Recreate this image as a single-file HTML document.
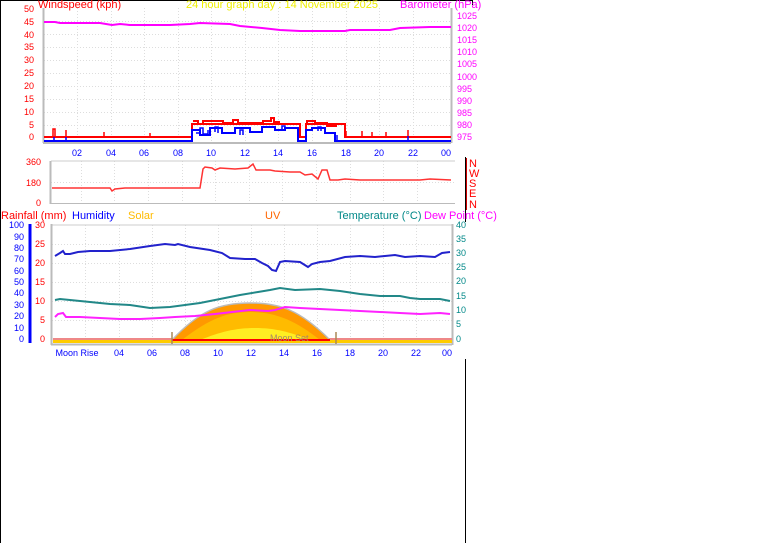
<!DOCTYPE html>
<html><head><meta charset="utf-8"><style>
html,body{margin:0;padding:0;background:#fff;width:761px;height:543px;overflow:hidden}
svg{display:block}
text{font-family:"Liberation Sans",sans-serif}
</style></head><body>
<svg width="761" height="543" viewBox="0 0 761 543" xmlns="http://www.w3.org/2000/svg">
<rect width="761" height="543" fill="#fff"/>
<!-- borders -->
<line x1="0.5" y1="0" x2="0.5" y2="543" stroke="#000"/>
<line x1="0" y1="0.5" x2="473" y2="0.5" stroke="#000"/>
<line x1="472.5" y1="0" x2="472.5" y2="5" stroke="#000"/>
<line x1="465.5" y1="157" x2="465.5" y2="222" stroke="#000"/>
<line x1="465.5" y1="359" x2="465.5" y2="543" stroke="#000"/>

<!-- ===== Chart 1 ===== -->
<text x="38" y="8" font-size="11" fill="#f00">Windspeed (kph)</text>
<text x="186" y="8" font-size="11" fill="#ee0">24 hour graph day : 14 November 2025</text>
<text x="400" y="8" font-size="11" fill="#f0f">Barometer (hPa)</text>
<g stroke="#ddd" stroke-dasharray="1,2" stroke-width="1">
<line x1="44" y1="21.5" x2="451" y2="21.5"/><line x1="44" y1="34.5" x2="451" y2="34.5"/><line x1="44" y1="47.5" x2="451" y2="47.5"/><line x1="44" y1="60.5" x2="451" y2="60.5"/><line x1="44" y1="73.5" x2="451" y2="73.5"/><line x1="44" y1="86.5" x2="451" y2="86.5"/><line x1="44" y1="99.5" x2="451" y2="99.5"/><line x1="44" y1="112.5" x2="451" y2="112.5"/><line x1="44" y1="125.5" x2="451" y2="125.5"/>
<line x1="77.5" y1="8" x2="77.5" y2="142"/><line x1="111.5" y1="8" x2="111.5" y2="142"/><line x1="144.5" y1="8" x2="144.5" y2="142"/><line x1="178.5" y1="8" x2="178.5" y2="142"/><line x1="211.5" y1="8" x2="211.5" y2="142"/><line x1="245.5" y1="8" x2="245.5" y2="142"/><line x1="278.5" y1="8" x2="278.5" y2="142"/><line x1="312.5" y1="8" x2="312.5" y2="142"/><line x1="346.5" y1="8" x2="346.5" y2="142"/><line x1="379.5" y1="8" x2="379.5" y2="142"/><line x1="413.5" y1="8" x2="413.5" y2="142"/>
</g>
<line x1="43.5" y1="8" x2="43.5" y2="143" stroke="#bbb" stroke-width="2"/>
<line x1="43" y1="143" x2="451" y2="143" stroke="#bbb" stroke-width="2"/>
<line x1="451.5" y1="8" x2="451.5" y2="143" stroke="#bbb" stroke-width="2"/>
<g font-size="9" fill="#f00" text-anchor="end">
<text x="34" y="12">50</text><text x="34" y="25">45</text><text x="34" y="38">40</text><text x="34" y="50">35</text><text x="34" y="63">30</text><text x="34" y="76">25</text><text x="34" y="89">20</text><text x="34" y="102">15</text><text x="34" y="115">10</text><text x="34" y="128">5</text><text x="34" y="140">0</text>
</g>
<g font-size="9" fill="#f0f">
<text x="457" y="19">1025</text><text x="457" y="31">1020</text><text x="457" y="43">1015</text><text x="457" y="55">1010</text><text x="457" y="67">1005</text><text x="457" y="80">1000</text><text x="457" y="92">995</text><text x="457" y="104">990</text><text x="457" y="116">985</text><text x="457" y="128">980</text><text x="457" y="140">975</text>
</g>
<g font-size="9" fill="#00f" text-anchor="middle">
<text x="77" y="156">02</text><text x="111" y="156">04</text><text x="144" y="156">06</text><text x="178" y="156">08</text><text x="211" y="156">10</text><text x="245" y="156">12</text><text x="278" y="156">14</text><text x="312" y="156">16</text><text x="346" y="156">18</text><text x="379" y="156">20</text><text x="413" y="156">22</text><text x="446" y="156">00</text>
</g>
<polyline fill="none" stroke="#f0f" stroke-width="2" points="44,22 55,22 60,23 100,23 112,25 120,24 130,25 170,25 190,24 200,23 230,24 240,26 262,28 280,30 300,31 345,31 350,30 390,30 400,28 430,27 451,27"/>
<path d="M44,137H192V124H300V137H306V124H345V137H451" fill="none" stroke="#f00" stroke-width="2"/>
<path d="M193,121h5v3h5v-3h20v2h10v-3h5v3h25v-2h8v-3h3v4h6M307,124v-3h8v2h12v3h10" fill="none" stroke="#f00" stroke-width="2"/>
<path d="M53,137v-8h2v8M66,137v-7M104,137v-5M150,137v-4M346,137v-6M362,137v-6M372,137v-5M386,137v-5M408,137v-7" fill="none" stroke="#f00" stroke-width="1.5"/>
<path d="M44,141H192V130H200V135H210V128H222V133H235V128H250V132H262V127H275V130H285V128H298V141H306V130H312V128H325V133H335V141H451" fill="none" stroke="#00f" stroke-width="2"/>
<path d="M196,133h4v-5h3v6h5v-4M215,132v-5h3v6M240,135v-5h3v5M282,130v-4h3v4M318,131v-4h3v4M337,140v-5M408,141v-5M54,141v-4M66,141v-4" fill="none" stroke="#00f" stroke-width="1.5"/>

<!-- ===== Chart 2 ===== -->
<g stroke="#ddd" stroke-dasharray="1,2">
<line x1="51" y1="182.5" x2="455" y2="182.5"/>
<line x1="81.5" y1="161" x2="81.5" y2="203"/><line x1="114.5" y1="161" x2="114.5" y2="203"/><line x1="148.5" y1="161" x2="148.5" y2="203"/><line x1="182.5" y1="161" x2="182.5" y2="203"/><line x1="215.5" y1="161" x2="215.5" y2="203"/><line x1="249.5" y1="161" x2="249.5" y2="203"/><line x1="282.5" y1="161" x2="282.5" y2="203"/><line x1="316.5" y1="161" x2="316.5" y2="203"/><line x1="350.5" y1="161" x2="350.5" y2="203"/><line x1="383.5" y1="161" x2="383.5" y2="203"/><line x1="417.5" y1="161" x2="417.5" y2="203"/>
</g>
<line x1="51" y1="161" x2="455" y2="161" stroke="#ccc"/>
<line x1="50.5" y1="161" x2="50.5" y2="204" stroke="#bbb" stroke-width="2"/>
<line x1="50" y1="203.5" x2="455" y2="203.5" stroke="#bbb"/>
<g font-size="9" fill="#f00" text-anchor="end">
<text x="41" y="165">360</text><text x="41" y="186">180</text><text x="41" y="206">0</text>
</g>
<polyline fill="none" stroke="#f33" stroke-width="1.5" points="52,188 110,188 112,191 115,189 125,188 132,188 150,188 190,188 200,188 203,169 205,167 212,168 215,170 220,168 235,169 248,168 253,164 256,170 270,170 275,171 290,172 300,172 305,175 312,174 318,179 322,170 327,170 330,180 338,180 345,179 360,180 370,180 420,180 430,179 451,180"/>
<line x1="466.5" y1="158" x2="466.5" y2="210" stroke="#c00"/>
<g font-size="11" fill="#f00">
<text x="469" y="167">N</text><text x="469" y="177">W</text><text x="469" y="187">S</text><text x="469" y="197">E</text><text x="469" y="208">N</text>
</g>

<!-- ===== Chart 3 ===== -->
<g font-size="11">
<text x="1" y="219" fill="#f00">Rainfall (mm)</text>
<text x="72" y="219" fill="#00f">Humidity</text>
<text x="128" y="219" fill="#fb0">Solar</text>
<text x="265" y="219" fill="#f60">UV</text>
<text x="337" y="219" fill="#088">Temperature (°C)</text>
<text x="424" y="219" fill="#f0f">Dew Point (°C)</text>
</g>
<g stroke="#ddd" stroke-dasharray="1,2">
<line x1="52" y1="244.5" x2="452" y2="244.5"/><line x1="52" y1="263.5" x2="452" y2="263.5"/><line x1="52" y1="282.5" x2="452" y2="282.5"/><line x1="52" y1="301.5" x2="452" y2="301.5"/><line x1="52" y1="320.5" x2="452" y2="320.5"/>
<line x1="85.5" y1="225" x2="85.5" y2="340"/><line x1="119.5" y1="225" x2="119.5" y2="340"/><line x1="152.5" y1="225" x2="152.5" y2="340"/><line x1="185.5" y1="225" x2="185.5" y2="340"/><line x1="218.5" y1="225" x2="218.5" y2="340"/><line x1="251.5" y1="225" x2="251.5" y2="340"/><line x1="284.5" y1="225" x2="284.5" y2="340"/><line x1="317.5" y1="225" x2="317.5" y2="340"/><line x1="350.5" y1="225" x2="350.5" y2="340"/><line x1="383.5" y1="225" x2="383.5" y2="340"/><line x1="416.5" y1="225" x2="416.5" y2="340"/>
</g>
<line x1="52" y1="225" x2="452" y2="225" stroke="#ccc"/>
<line x1="51.5" y1="224" x2="51.5" y2="345" stroke="#bbb" stroke-width="2"/>
<line x1="452.5" y1="224" x2="452.5" y2="345" stroke="#bbb" stroke-width="2"/>
<line x1="51" y1="344.5" x2="452" y2="344.5" stroke="#bbb" stroke-width="2"/>
<line x1="30" y1="224" x2="30" y2="343" stroke="#00f" stroke-width="3"/>
<g font-size="9" fill="#00f" text-anchor="end">
<text x="24" y="228">100</text><text x="24" y="240">90</text><text x="24" y="251">80</text><text x="24" y="262">70</text><text x="24" y="274">60</text><text x="24" y="285">50</text><text x="24" y="296">40</text><text x="24" y="308">30</text><text x="24" y="319">20</text><text x="24" y="331">10</text><text x="24" y="342">0</text>
</g>
<g font-size="9" fill="#f00" text-anchor="end">
<text x="45" y="228">30</text><text x="45" y="247">25</text><text x="45" y="266">20</text><text x="45" y="285">15</text><text x="45" y="304">10</text><text x="45" y="323">5</text><text x="45" y="342">0</text>
</g>
<g font-size="9" fill="#088">
<text x="456" y="228">40</text><text x="456" y="242">35</text><text x="456" y="256">30</text><text x="456" y="270">25</text><text x="456" y="284">20</text><text x="456" y="299">15</text><text x="456" y="313">10</text><text x="456" y="327">5</text><text x="456" y="342">0</text>
</g>
<!-- solar dome -->
<rect x="53" y="338" width="399" height="5" fill="#fc0"/>
<rect x="53" y="338" width="399" height="2" fill="#e88"/>
<path d="M172,340 C200,310 220,303 250,303 C280,303 300,310 330,340Z" fill="#f90"/>
<path d="M182,340 C210,318 228,312 250,312 C275,312 295,320 320,340Z" fill="#fb0"/>
<path d="M200,340 C220,332 235,328 255,328 C275,328 290,332 310,340Z" fill="#fe2"/>
<path d="M172,340 C200,310 220,303 250,303 C280,303 300,310 330,340" fill="none" stroke="#bbb" stroke-width="1.5"/>
<line x1="172" y1="340" x2="330" y2="340" stroke="#f00" stroke-width="2"/>
<line x1="172" y1="332" x2="172" y2="344" stroke="#a85" stroke-width="1.5"/>
<line x1="336" y1="332" x2="336" y2="344" stroke="#a85" stroke-width="1.5"/>
<text x="270" y="341" font-size="9" fill="#a86">Moon Set</text>
<!-- lines -->
<polyline fill="none" stroke="#22c" stroke-width="2" points="55,256 60,253 63,251 65,254 70,254 78,252 90,251 110,251 130,249 150,246 165,244 175,245 178,244 190,247 210,250 222,253 230,258 245,259 255,259 262,263 268,266 272,270 276,271 280,262 285,261 300,262 308,267 312,264 320,262 330,261 345,257 360,256 375,257 385,256 395,255 405,257 420,256 435,257 442,253 450,252"/>
<polyline fill="none" stroke="#288" stroke-width="2" points="55,300 60,299 70,300 90,302 110,304 130,305 150,308 170,307 185,305 200,303 220,299 240,295 258,292 270,290 280,288 295,290 320,289 340,291 360,294 380,296 400,296 410,298 420,299 440,299 450,301"/>
<polyline fill="none" stroke="#f2f" stroke-width="2" points="55,317 58,314 63,313 66,317 80,317 100,318 120,319 140,319 160,318 175,317 195,316 215,314 232,312 250,310 268,311 275,310 285,307 300,308 320,309 340,310 360,311 380,312 400,313 420,314 440,313 450,314"/>
<g font-size="9" fill="#00f" text-anchor="middle">
<text x="77" y="356">Moon Rise</text><text x="119" y="356">04</text><text x="152" y="356">06</text><text x="185" y="356">08</text><text x="218" y="356">10</text><text x="251" y="356">12</text><text x="284" y="356">14</text><text x="317" y="356">16</text><text x="350" y="356">18</text><text x="383" y="356">20</text><text x="416" y="356">22</text><text x="447" y="356">00</text>
</g>
</svg>
</body></html>
